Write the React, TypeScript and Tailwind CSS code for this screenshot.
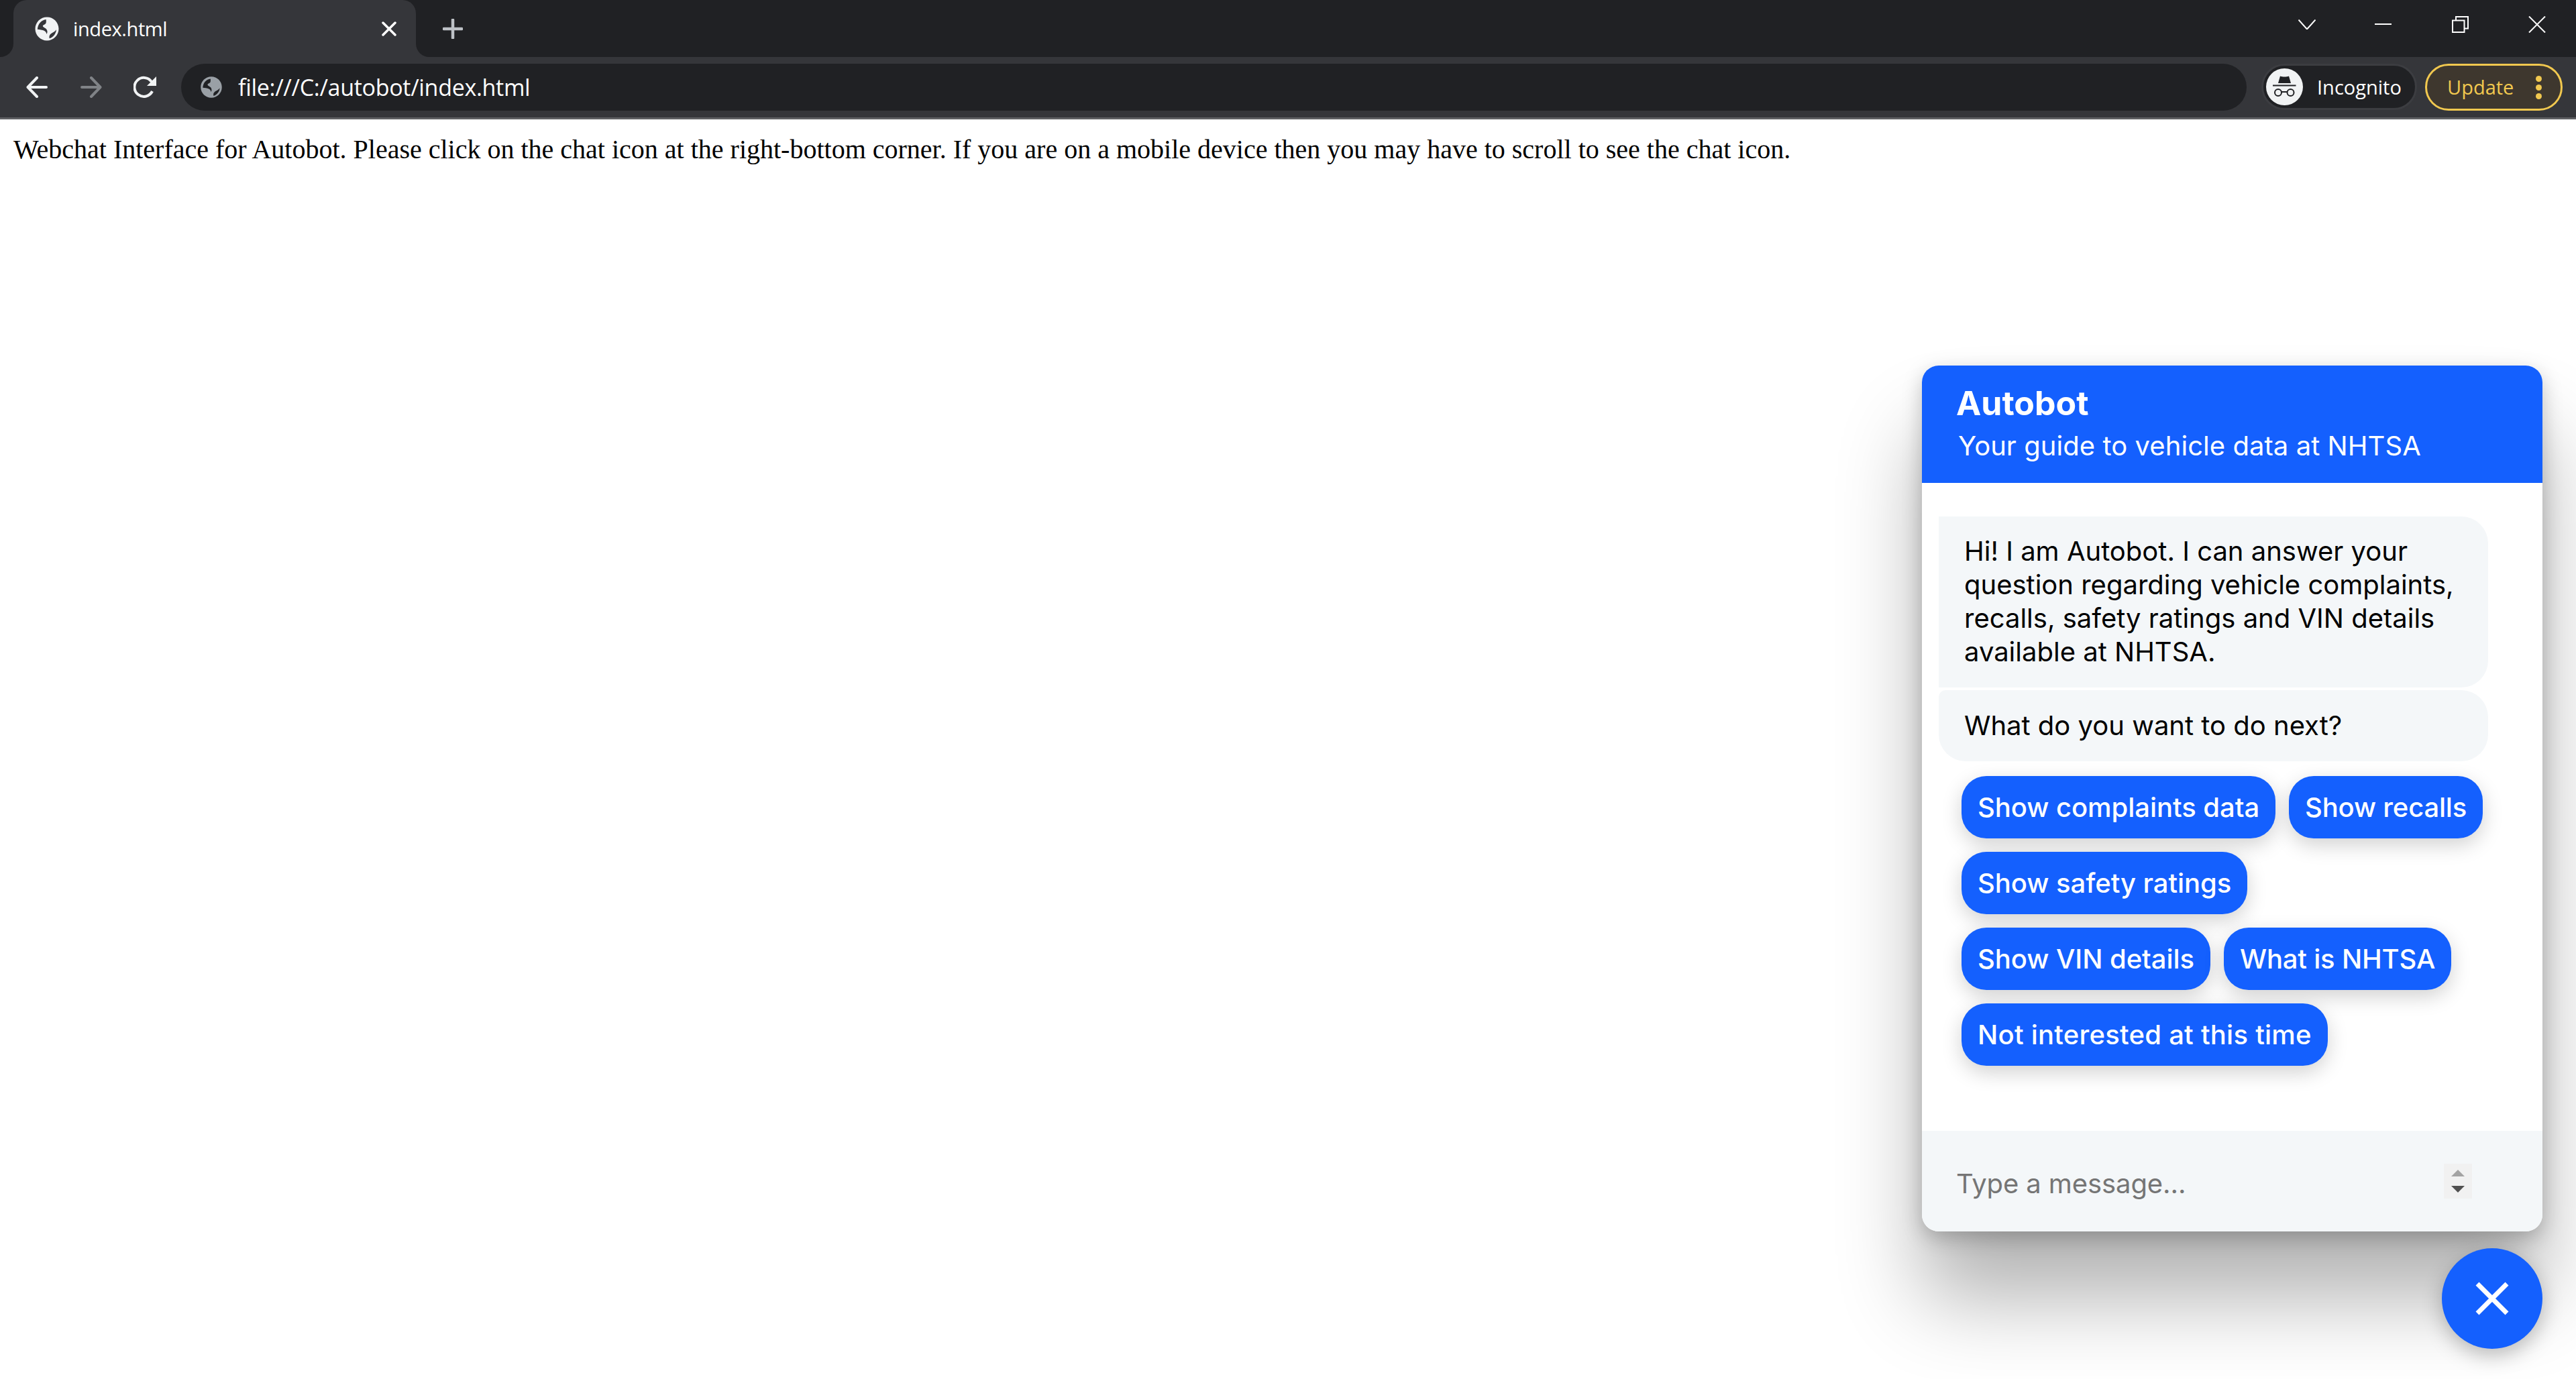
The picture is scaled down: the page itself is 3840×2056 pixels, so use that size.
import React from "react";

const chatFont = "font-['Inter','Noto_Sans',sans-serif]";
const chromeFont = "font-['Open_Sans','Noto_Sans',sans-serif]";

function Globe({ className }: { className?: string }) {
  return (
    <svg viewBox="0 0 24 24" className={className} fill="currentColor">
      <path
        fillRule="evenodd"
        d="M12 1.500C6.200 1.500 1.500 6.200 1.500 12S6.200 22.500 12 22.500 22.500 17.800 22.500 12 17.800 1.500 12 1.500zM11.200 3.600C7.200 4 3.900 7.300 3.500 12.500c2 .3 4.500.4 6 1.100 1.300.6 2 1.700 2.100 3 1-.8 1-3-.2-4.400-1.100-1.200-3-1.500-3.100-2.700 0-1.100 2-1.200 2.700-2.500.4-.8.3-2.300.2-3.400zM20.400 12.800c-1 1.400-2.600 2.300-3.900 3-1.200.7-2.200 1.700-2.400 2.900-.1.700 0 1.300.2 1.900 3.300-.9 5.800-4.200 6.100-7.800z"
      />
    </svg>
  );
}

function Incognito() {
  return (
    <svg viewBox="0 0 55 55" className="w-[55px] h-[55px] shrink-0">
      <circle cx="27.500" cy="27.500" r="27.500" fill="#f1f3f4" />
      <path d="M18 22l3-10.500c2 .8 4 1 6.500 1s4.500-.2 6.500-1L37 22z" fill="#202124" />
      <rect x="10" y="24.500" width="34.500" height="2" fill="#202124" />
      <circle cx="18" cy="36" r="5" fill="none" stroke="#202124" strokeWidth="2" />
      <circle cx="36.500" cy="36" r="5" fill="none" stroke="#202124" strokeWidth="2" />
      <path d="M23 35h8.500" stroke="#202124" strokeWidth="2" />
    </svg>
  );
}

// the concave little corners at the bottom of the active tab
function TabFlare({ side }: { side: "left" | "right" }) {
  return (
    <div className={side === "left" ? "absolute -left-[20px] bottom-0 w-[20px] h-[20px] bg-[#35363a]" : "absolute -right-[20px] bottom-0 w-[20px] h-[20px] bg-[#35363a]"}>
      <div className={side === "left" ? "w-full h-full bg-[#202124] rounded-br-[20px]" : "w-full h-full bg-[#202124] rounded-bl-[20px]"} />
    </div>
  );
}

function QuickReply({ label, tracking }: { label: string; tracking: string }) {
  return (
    <button className={`h-[93px] px-[24px] rounded-[37px] bg-[#1460fe] text-white text-[40px] font-medium shadow-[0_10px_30px_rgba(0,0,0,0.18)] ${tracking}`}>
      {label}
    </button>
  );
}

function ChatWidget() {
  return (
    <div className={`absolute right-[50px] bottom-[45px] flex flex-col items-end ${chatFont}`}>
      <div className="w-[925px] h-[1291px] flex flex-col rounded-[25px] bg-white overflow-hidden shadow-[0_100px_125px_rgba(0,0,0,0.3),0_10px_30px_rgba(0,0,0,0.22)]">
        <div className="h-[175px] bg-[#1460fe] text-white pl-[51px] pt-[24px]">
          <div className="text-[50px] leading-[64px] font-bold">Autobot</div>
          <div className="text-[40px] leading-[64px] pl-[3px] tracking-[0.05px]">Your guide to vehicle data at NHTSA</div>
        </div>
        <div className="flex-1 pt-[50px] pl-[25px]">
          <div className="w-[819px] flex flex-col gap-[4px] text-[40px] leading-[50px] text-black">
            <div className="bg-[#f4f7f9] rounded-[40px] rounded-tl-none rounded-bl-none pl-[38px] pr-[30px] pt-[27px] pb-[28px]">
              Hi! I am Autobot. I can answer your question regarding vehicle complaints, recalls, safety ratings and VIN details available at NHTSA.
            </div>
            <div className="bg-[#f4f7f9] rounded-[40px] rounded-tl-[10px] pl-[38px] pr-[30px] py-[28px]">What do you want to do next?</div>
          </div>
          <div className="mt-[22px] ml-[34px] w-[800px] flex flex-wrap gap-x-[20px] gap-y-[20px]">
            <QuickReply label="Show complaints data" tracking="tracking-[-0.05px]" />
            <QuickReply label="Show recalls" tracking="tracking-[-0.2px]" />
            <QuickReply label="Show safety ratings" tracking="tracking-[-0.05px]" />
            <QuickReply label="Show VIN details" tracking="tracking-[-0.05px]" />
            <QuickReply label="What is NHTSA" tracking="tracking-[-0.2px]" />
            <QuickReply label="Not interested at this time" tracking="tracking-[0.25px]" />
          </div>
        </div>
        <div className="h-[150px] bg-[#f4f7f9] flex items-center pl-[51px] pr-[105px]">
          <div className="flex-1 text-[40px] text-[#757575] pt-[8px] tracking-[-0.1px]">Type a message...</div>
          <div className="w-[42px] h-[52px] bg-[#f1f1f1] flex flex-col items-center justify-center gap-[14px]">
            <div className="w-0 h-0 border-x-[10px] border-x-transparent border-b-[10px] border-b-[#a3a3a3]" />
            <div className="w-0 h-0 border-x-[10px] border-x-transparent border-t-[10px] border-t-[#505050]" />
          </div>
        </div>
      </div>
      <button className="mt-[25px] w-[150px] h-[150px] rounded-full bg-[#1460fe] flex items-center justify-center shadow-[0_10px_30px_rgba(0,0,0,0.25)]">
        <svg viewBox="0 0 50 50" className="w-[50px] h-[50px]">
          <path d="M3 3l44 44M47 3L3 47" stroke="#fff" strokeWidth="7" />
        </svg>
      </button>
    </div>
  );
}

export default function App() {
  return (
    <div className="relative h-screen overflow-hidden bg-white">
      <div className={`h-[85px] bg-[#202124] flex items-end text-white ${chromeFont}`}>
        <div className="relative ml-[20px] w-[600px] h-[85px] bg-[#35363a] rounded-t-[20px] flex items-center pl-[30px] pr-[29px]">
          <TabFlare side="left" />
          <TabFlare side="right" />
          <Globe className="w-[40px] h-[40px] text-[#f1f3f4] shrink-0" />
          <span className="ml-[19px] text-[29px] flex-1 tracking-[-0.4px]">index.html</span>
          <svg viewBox="0 0 22 22" className="w-[22px] h-[22px]">
            <path d="M2 2l18 18M20 2L2 20" stroke="#fff" strokeWidth="3.500" strokeLinecap="round" />
          </svg>
        </div>
        <svg viewBox="0 0 30 30" className="ml-[40px] mb-[27px] w-[30px] h-[30px]">
          <path d="M15 1.500v27M1.500 15h27" stroke="#bdc1c6" strokeWidth="4.500" strokeLinecap="round" />
        </svg>
        <div className="flex-1" />
        <div className="h-[85px] flex items-start">
          <svg viewBox="0 0 26 15" className="mt-[29px] w-[26px] h-[15px]">
            <path d="M.5.5l12.500 14L25.500.5" stroke="#fff" strokeWidth="2" fill="none" />
          </svg>
          <div className="mt-[35px] ml-[88px] w-[25px] h-[2px] bg-white" />
          <svg viewBox="0 0 25 25" className="mt-[24px] ml-[90px] w-[25px] h-[25px]">
            <path d="M1 6.500h17.500V24H1zM6 6.500V1h18v17.500h-5.500" stroke="#fff" strokeWidth="2" fill="none" />
          </svg>
          <svg viewBox="0 0 26 25" className="mt-[24px] ml-[89px] mr-[45px] w-[26px] h-[25px]">
            <path d="M1 .5l24 24M25 .5l-24 24" stroke="#fff" strokeWidth="2" fill="none" />
          </svg>
        </div>
      </div>
      <div className={`h-[93px] bg-[#35363a] border-b-[3px] border-b-[#5f6063] flex items-start pt-[10px] text-white ${chromeFont}`}>
        <svg viewBox="0 0 32 32" className="ml-[39px] mt-[19px] w-[32px] h-[32px]" fill="none" stroke="#f1f3f4" strokeWidth="4" strokeLinecap="round" strokeLinejoin="round">
          <path d="M30 16H3M16 2L2.500 16 16 30" />
        </svg>
        <svg viewBox="0 0 32 32" className="ml-[49px] mt-[19px] w-[32px] h-[32px]" fill="none" stroke="#808387" strokeWidth="4" strokeLinecap="round" strokeLinejoin="round">
          <path d="M2 16h27M16 2l13.500 14L16 30" />
        </svg>
        <svg viewBox="0 0 34 34" className="ml-[47px] mt-[18px] w-[34px] h-[34px]" fill="none">
          <path d="M28 23a14 14 0 1 1-1-14" stroke="#f1f3f4" strokeWidth="4" />
          <path d="M34 1v14H20z" fill="#f1f3f4" />
        </svg>
        <div className="ml-[37px] flex-1 h-[70px] rounded-full bg-[#202124] flex items-center pl-[27px]">
          <Globe className="w-[36px] h-[36px] text-[#9aa0a6] shrink-0" />
          <span className="ml-[22px] text-[34px] tracking-[-0.3px]">file:///C:/autobot/index.html</span>
        </div>
        <div className="ml-[22px] w-[232px] h-[69px] rounded-full bg-[#202124] border-[3px] border-[#3c3d41] flex items-center pl-[4px]">
          <Incognito />
          <span className="ml-[21px] text-[29px]">Incognito</span>
        </div>
        <div className="ml-[12px] mr-[20px] w-[205px] h-[70px] rounded-full bg-[#3e372e] border-[3px] border-[#f1c84f] flex items-center pl-[30px] text-[#f1c84f]">
          <span className="text-[29px]">Update</span>
          <div className="ml-[33px] flex flex-col gap-[4px]">
            <div className="w-[9px] h-[9px] rounded-full bg-[#f1c84f]" />
            <div className="w-[9px] h-[9px] rounded-full bg-[#f1c84f]" />
            <div className="w-[9px] h-[9px] rounded-full bg-[#f1c84f]" />
          </div>
        </div>
      </div>
      <p className="mx-[20px] mt-[22px] text-[40px] leading-[46px] text-black font-['Liberation_Serif',serif]">
        Webchat Interface for Autobot. Please click on the chat icon at the right-bottom corner. If you are on a mobile device then you may have to scroll to see the chat icon.
      </p>
      <ChatWidget />
    </div>
  );
}
